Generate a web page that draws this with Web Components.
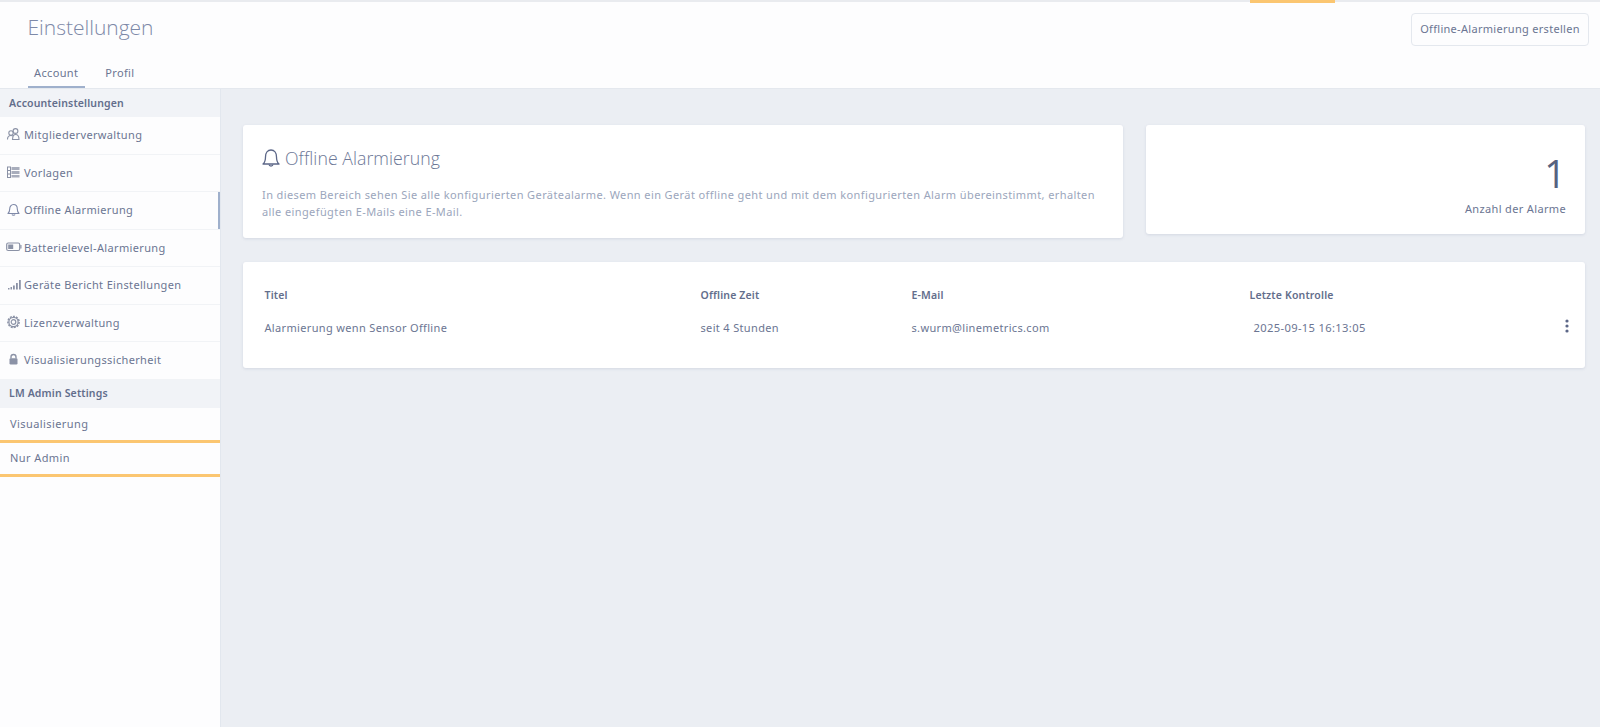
<!DOCTYPE html>
<html lang="de"><head><meta charset="utf-8"><title>Einstellungen</title>
<style>
html,body{margin:0;height:100%;background:#ebeef3;overflow:hidden}
body{font-family:"Noto Sans","Open Sans",sans-serif;color:#6b7592}
</style></head><body>
<settings-app>
  <page-header slot="header"></page-header>
  <side-nav slot="side">
    <nav-section>Accounteinstellungen</nav-section>
    <nav-item icon="users">Mitgliederverwaltung</nav-item>
    <nav-item icon="table">Vorlagen</nav-item>
    <nav-item icon="bell" active>Offline Alarmierung</nav-item>
    <nav-item icon="battery">Batterielevel-Alarmierung</nav-item>
    <nav-item icon="signal">Geräte Bericht Einstellungen</nav-item>
    <nav-item icon="gear">Lizenzverwaltung</nav-item>
    <nav-item icon="lock">Visualisierungssicherheit</nav-item>
    <nav-section>LM Admin Settings</nav-section>
    <nav-item plain mark>Visualisierung</nav-item>
    <nav-item plain mark>Nur Admin</nav-item>
  </side-nav>
  <main-area slot="main">
    <intro-card></intro-card>
    <count-card></count-card>
    <alarm-table></alarm-table>
  </main-area>
</settings-app>
<script>
const ICONS={
users:'<g fill="none" stroke="#8b92a6" stroke-width="1.1"><circle cx="9.5" cy="4" r="2.4"/><circle cx="5" cy="6" r="2.2"/><path d="M1.500 12.500c0-2.600 1.500-4 3.500-4 1 0 1.800.3 2.400 1M6.500 12.500c.2-3 1.300-5 3-5s3.500 1.700 3.500 5z"/></g>',
table:'<g fill="none" stroke="#8b92a6" stroke-width="1"><rect x="1.500" y="2" width="3" height="10.500"/><path d="M1.500 5.500h3M1.500 9h3"/></g><path d="M5.500 2h8v3h-8zM5.500 6h8v3h-8zM5.500 10h8v2.500h-8z" fill="#8b92a6" opacity=".75"/>',
bell:'<g fill="none" stroke="#7f89a8" stroke-width="1.100" stroke-linejoin="round"><path d="M2 11.500c1.200-1 1.700-2.200 1.700-4.500 0-2.500 1.500-4.500 3.800-4.500s3.800 2 3.800 4.500c0 2.300.5 3.500 1.700 4.500z"/><path d="M6 12.500c.3 1 2.700 1 3 0"/></g>',
battery:'<g fill="none" stroke="#8b92a6" stroke-width="1.200"><rect x=".7" y="3" width="13" height="7.500" rx="1.500"/></g><rect x="2.200" y="4.500" width="5" height="4.500" fill="#8b92a6"/><rect x="14.300" y="5" width="1.200" height="3.500" fill="#8b92a6"/>',
signal:'<path d="M2 11h1.500v1.500H2zM4.500 10H6v2.500H4.500zM7 8.500h1.800v4H7zM10 6h1.800v6.500H10zM13 3h1.800v9.500H13z" fill="#8b92a6"/>',
gear:'<circle cx="7.500" cy="7" r="2.300" fill="none" stroke="#8b92a6" stroke-width="1.200"/><circle cx="7.500" cy="7" r="4.600" fill="none" stroke="#8b92a6" stroke-width="1.200"/><circle cx="7.500" cy="7" r="5.600" fill="none" stroke="#8b92a6" stroke-width="1.500" stroke-dasharray="2 1.140"/>',
lock:'<path d="M5 6.500V5a2.500 2.500 0 0 1 5 0v1.500" fill="none" stroke="#8b92a6" stroke-width="1.400"/><rect x="3.500" y="6.300" width="8" height="6.200" rx="1.200" fill="#8b92a6"/>'
};
function el(name,css,html){
  customElements.define(name,class extends HTMLElement{
    connectedCallback(){
      if(this.shadowRoot)return;
      const r=this.attachShadow({mode:'open'});
      r.innerHTML='<style>'+css+'</style>'+(typeof html==='function'?html(this):html);
    }
  });
}
el('settings-app',`
:host{display:grid;grid-template-columns:221px 1fr;grid-template-rows:89px 638px;width:1600px;height:727px;overflow:hidden}
.h{grid-column:1/3}`,
`<div class="h"><slot name="header"></slot></div><slot name="side"></slot><slot name="main"></slot>`);

el('page-header',`
:host{display:flex;justify-content:space-between;height:89px;box-sizing:border-box;background:#fdfdfe;border-top:2px solid #e9ebef;border-bottom:1px solid #e4e8ee;position:relative}
.l{padding:10px 0 0 27.500px;display:flex;flex-direction:column}
h1{margin:0;font:300 21px/30px "Open Sans",sans-serif;color:#7d89a8;letter-spacing:-.02px}
nav{display:flex;margin-top:19px;height:27px}
a{font-size:11px;line-height:23px;color:#6b7592;letter-spacing:.35px;padding:0 6.500px 0 6.500px;box-sizing:border-box;height:27px}
a.on{border-bottom:2px solid #9fb0cc;margin-right:14px}
.mark{position:absolute;left:1250px;top:-2px;width:85px;height:2.500px;background:#fbc671}
button{margin:11px 11px 0 0;height:33px;width:178px;background:#fdfdfe;border:1px solid #e4e8ee;border-radius:4px;font:11px "Noto Sans",sans-serif;letter-spacing:.3px;color:#6b7592;padding:0 0 2px}`,
`<div class="l"><h1>Einstellungen</h1><nav><a class="on">Account</a><a>Profil</a></nav></div><button>Offline-Alarmierung erstellen</button><div class="mark"></div>`);

el('side-nav',`:host{display:block;background:#fdfdfe;border-right:1px solid #e2e7ee;width:221px;box-sizing:border-box;height:638px}`,`<slot></slot>`);

el('nav-section',`:host{display:flex;align-items:center;height:28px;padding-left:9px;padding-bottom:1px;box-sizing:border-box;background:#f1f3f7;font-size:10.500px;font-weight:600;color:#636e8c;letter-spacing:.15px}`,`<slot></slot>`);

el('nav-item',`
:host{display:flex;align-items:center;height:37.500px;box-sizing:border-box;padding-bottom:1px;border-bottom:1px solid #f1f3f6;font-size:11px;color:#6b7592;letter-spacing:.35px;position:relative}
:host([plain]){padding-left:10px;height:34px;border-bottom:0;padding-bottom:3px;letter-spacing:.42px}
:host([mark])::after{content:"";position:absolute;left:0;right:0;bottom:-1px;height:3px;background:#fbc671}
:host([active])::before{content:"";position:absolute;right:0;top:0;bottom:0;width:2px;background:#9fb0cc}
svg{width:16px;height:15px;margin:0 2px 0 6px;flex:none}`,
h=>{const i=h.getAttribute('icon');return (i?`<svg viewBox="0 0 16 15">${ICONS[i]}</svg>`:'')+'<slot></slot>'});

el('main-area',`:host{display:grid;grid-template-columns:880px 439px;grid-template-rows:auto auto;column-gap:23px;row-gap:24px;align-content:start;align-items:start;padding:36px 15px 0 22px;background:#ebeef3;box-sizing:border-box;height:638px}`,`<slot></slot>`);

const card=`:host{display:block;background:#fff;border-radius:3px;box-shadow:0 1px 3px rgba(90,105,140,.16);box-sizing:border-box}`;

el('intro-card',card+`
:host{height:113px;padding:19.500px 18px 0 19px}
h2{margin:0;display:flex;align-items:center;gap:4px;font:300 17.700px/26px "Open Sans",sans-serif;color:#6d7897;letter-spacing:.05px}
svg{width:20px;height:22px;flex:none;margin-left:-1px}
p{margin:15.500px 0 0;font-size:11px;line-height:17.300px;color:#9ba6bc;letter-spacing:.4px;white-space:nowrap}`,
`<h2><svg viewBox="0 0 20 22"><g fill="none" stroke="#5c6788" stroke-width="1.300" stroke-linejoin="round"><path d="M2 17c1.800-1.500 2.500-3.500 2.500-7 0-4 2.200-7 5.500-7s5.500 3 5.500 7c0 3.500.7 5.500 2.500 7z"/><path d="M8 17.500c.3 2 3.700 2 4 0"/></g></svg>Offline Alarmierung</h2>
<p>In diesem Bereich sehen Sie alle konfigurierten Gerätealarme. Wenn ein Gerät offline geht und mit dem konfigurierten Alarm übereinstimmt, erhalten<br>alle eingefügten E-Mails eine E-Mail.</p>`);

el('count-card',card+`
:host{height:109px;padding:24px 19px 0 0;text-align:right}
.n{font:400 38px/48px "Open Sans",sans-serif;color:#56627f}
.t{font-size:11px;line-height:18px;margin-top:3px;color:#6b7592;letter-spacing:.35px}`,
`<div class="n">1</div><div class="t">Anzahl der Alarme</div>`);

el('alarm-table',card+`
:host{grid-column:1/3;height:106px;padding:23px 13px 0 21.500px}
.r{display:grid;grid-template-columns:436px 211px 338px 1fr 8px;align-items:center;font-size:11px;letter-spacing:.34px}
.head{height:20px;font-weight:600;font-size:10.500px;color:#636e8c;letter-spacing:.16px}
.row{height:20px;margin-top:12px;color:#6b7592}
.d{padding-left:4px;font-size:11.200px}
svg{width:6px;height:16px;margin-top:-3px}`,
`<div class="r head"><span>Titel</span><span>Offline Zeit</span><span>E-Mail</span><span>Letzte Kontrolle</span><span></span></div>
<div class="r row"><span>Alarmierung wenn Sensor Offline</span><span>seit 4 Stunden</span><span>s.wurm@linemetrics.com</span><span class="d">2025-09-15 16:13:05</span><svg viewBox="0 0 6 16"><circle cx="3" cy="3" r="1.600" fill="#5c6788"/><circle cx="3" cy="8" r="1.600" fill="#5c6788"/><circle cx="3" cy="13" r="1.600" fill="#5c6788"/></svg></div>`);
</script>
</body></html>
